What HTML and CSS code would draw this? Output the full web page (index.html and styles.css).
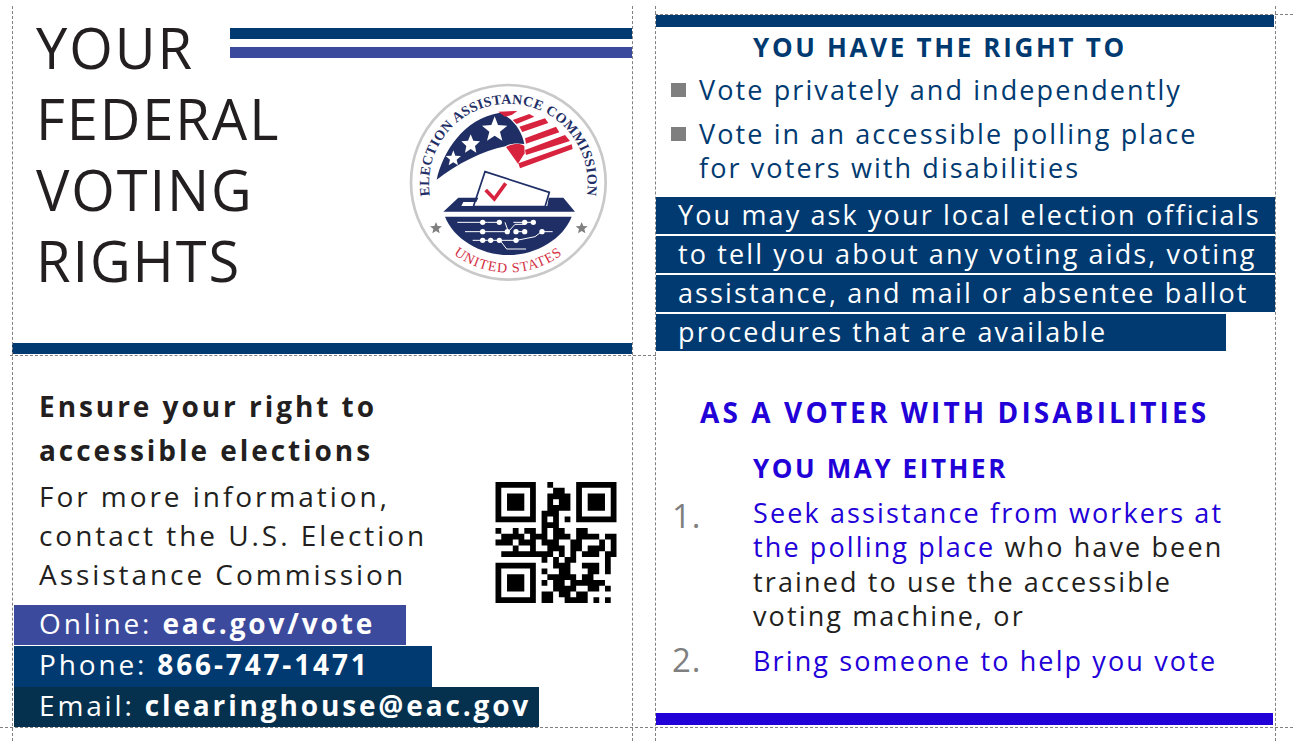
FILE: index.html
```html
<!DOCTYPE html>
<html lang="en">
<head>
<meta charset="utf-8">
<title>Your Federal Voting Rights</title>
<link rel="stylesheet" href="styles.css">
</head>
<body>
<main class="sheet">
  <section class="panel cover">
    <h1 class="title">YOUR<br>FEDERAL<br>VOTING<br>RIGHTS</h1>
    <div class="cover-side">
      <div class="rule rule-navy"></div>
      <div class="rule rule-indigo"></div>
      <svg class="seal" viewBox="0 0 660 645" role="img" aria-label="Election Assistance Commission seal">
        <defs>
          <path id="arcTop" d="M100 402A238 238 0 1 1 550 402"/>
          <path id="arcBottom" d="M71 414A270 270 0 0 0 579 414"/>
        </defs>
        <circle class="seal-ring" cx="325" cy="322" r="292"/>
        <text class="seal-top"><textPath href="#arcTop" startOffset="50%" text-anchor="middle">ELECTION ASSISTANCE COMMISSION</textPath></text>
        <text class="seal-bottom"><textPath href="#arcBottom" startOffset="50%" text-anchor="middle">UNITED STATES</textPath></text>
        <path class="navy" d="M110 314C128 232 190 130 300 113C340 130 366 170 373 207C345 203 325 207 316 214C250 226 170 268 110 314Z"/>
        <path class="red" d="M295 110L352 108L335 120L315 125ZM338 135L388 117L403 125L350 147ZM358 155L435 130L445 144L367 171ZM375 190L468 155L478 172L378 206ZM375 225L495 180L510 198L378 240ZM355 265L515 208L518 222L360 280Z"/>
        <path class="red" d="M318 216C340 205 362 205 373 213L374 235L354 266Z"/>
        <path class="white" d="M160 226l6 16 17 1-13 11 4 17-14-9-14 9 4-17-13-11 17-1ZM212 178l8 19 20 2-15 14 4 20-17-11-17 11 4-20-15-14 20-2ZM284 124l10 26 28 2-22 18 7 27-23-15-23 15 7-27-22-18 28-2Z"/>
        <path class="ballot" d="M255 290L448 352L435 395L220 395Z"/>
        <path class="check" d="M257 345L283 372L317 325"/>
        <path class="navy" d="M130 410L175 368H235L229 381H190L184 393H442L446 368H490L525 410Z"/>
        <path class="navy" d="M135 425H515C490 490 410 540 325 540C240 540 160 490 135 425Z"/>
        <path class="circuit" d="M172 442H250L262 442H300M340 442H400M315 442L325 470L345 448H372M195 470H322M345 470H375M405 485L425 470H458M218 496H262L300 496L320 522H378M305 496H350L405 485"/>
        <g class="dots">
          <circle cx="248" cy="442" r="8"/><circle cx="298" cy="442" r="8"/><circle cx="374" cy="442" r="8"/><circle cx="400" cy="442" r="8"/>
          <circle cx="248" cy="470" r="8"/><circle cx="322" cy="470" r="8"/><circle cx="348" cy="470" r="8"/><circle cx="374" cy="470" r="8"/><circle cx="426" cy="470" r="8"/>
          <circle cx="248" cy="496" r="8"/><circle cx="272" cy="496" r="8"/><circle cx="298" cy="496" r="8"/><circle cx="348" cy="496" r="8"/>
        </g>
        <path class="grey-star" d="M108 441l5 12 13 1-10 8 3 13-11-7-11 7 3-13-10-8 13-1ZM545 441l5 12 13 1-10 8 3 13-11-7-11 7 3-13-10-8 13-1Z"/>
      </svg>
    </div>
  </section>

  <section class="panel rights">
    <div class="bar-navy"></div>
    <h2 class="rights-head">YOU HAVE THE RIGHT TO</h2>
    <ul class="bullets">
      <li>Vote privately and independently</li>
      <li>Vote in an accessible polling place<br>for voters with disabilities</li>
    </ul>
    <div class="bands">
      <p class="band">You may ask your local election officials</p>
      <p class="band">to tell you about any voting aids, voting</p>
      <p class="band">assistance, and mail or absentee ballot</p>
      <p class="band band-short">procedures that are available</p>
    </div>
  </section>

  <section class="panel contact">
    <div class="contact-top">
      <div class="contact-copy">
        <h2 class="ensure">Ensure your right to<br>accessible elections</h2>
        <p class="more">For more information,<br>contact the U.S. Election<br>Assistance Commission</p>
      </div>
      <svg class="qr" viewBox="0 0 21 21" role="img" aria-label="QR code">
        <path d="M0 .5h7M9 .5h1M14 .5h7M0 1.5h1M6 1.5h1M10 1.5h2M14 1.5h1M20 1.5h1M0 2.5h1M2 2.5h3M6 2.5h1M9 2.5h4M14 2.5h1M16 2.5h3M20 2.5h1M0 3.5h1M2 3.5h3M6 3.5h1M9 3.5h1M11 3.5h2M14 3.5h1M16 3.5h3M20 3.5h1M0 4.5h1M2 4.5h3M6 4.5h1M9 4.5h4M14 4.5h1M16 4.5h3M20 4.5h1M0 5.5h1M6 5.5h1M8 5.5h3M14 5.5h1M20 5.5h1M0 6.5h7M8 6.5h1M10 6.5h1M12 6.5h1M14 6.5h7M8 7.5h3M0 8.5h1M3 8.5h1M5 8.5h2M8 8.5h1M10 8.5h2M14 8.5h2M1 9.5h4M6 9.5h3M10 9.5h3M14 9.5h4M19 9.5h2M0 10.5h3M4 10.5h3M8 10.5h3M13 10.5h2M18 10.5h1M20 10.5h1M3 11.5h1M6 11.5h1M9 11.5h3M13 11.5h2M16 11.5h3M20 11.5h1M1 12.5h9M11 12.5h1M13 12.5h1M15 12.5h3M19 12.5h2M8 13.5h1M10 13.5h1M12 13.5h2M19 13.5h1M0 14.5h7M10 14.5h3M15 14.5h3M19 14.5h1M0 15.5h1M6 15.5h1M8 15.5h1M11 15.5h2M16 15.5h2M19 15.5h1M0 16.5h1M2 16.5h3M6 16.5h1M9 16.5h5M15 16.5h2M0 17.5h1M2 17.5h3M6 17.5h1M8 17.5h1M10 17.5h2M13 17.5h6M0 18.5h1M2 18.5h3M6 18.5h1M10 18.5h4M16 18.5h2M19 18.5h1M0 19.5h1M6 19.5h1M8 19.5h2M11 19.5h2M14 19.5h2M0 20.5h7M8 20.5h2M12 20.5h4M17 20.5h1M19 20.5h1"/>
      </svg>
    </div>
    <p class="strip strip-online">Online: <b>eac.gov/vote</b></p>
    <p class="strip strip-phone">Phone: <b>866-747-1471</b></p>
    <p class="strip strip-email">Email: <b>clearinghouse@eac.gov</b></p>
  </section>

  <section class="panel disabilities">
    <h2 class="dis-head">AS A VOTER WITH DISABILITIES</h2>
    <h3 class="dis-sub">YOU MAY EITHER</h3>
    <ol class="steps">
      <li class="step"><span class="num">1.</span><span class="step-text"><span class="blue">Seek assistance from workers at<br>the polling place</span> who have been<br>trained to use the accessible<br>voting machine, or</span></li>
      <li class="step step-2"><span class="num">2.</span><span class="step-text blue">Bring someone to help you vote</span></li>
    </ol>
    <div class="bar-blue"></div>
  </section>

  <div class="mark v v1"></div>
  <div class="mark v v2"></div>
  <div class="mark v v3"></div>
  <div class="mark v v4"></div>
  <div class="mark h h1"></div>
  <div class="mark h h2"></div>
  <div class="mark h h3"></div>
</main>
</body>
</html>
```

FILE: styles.css
```css
* { box-sizing: border-box; }
html, body { margin: 0; padding: 0; background: #fff; }
body { width: 1293px; height: 741px; overflow: hidden; font-family: "Open Sans", "Noto Sans", sans-serif; }
h1, h2, h3, p, ul, ol { margin: 0; padding: 0; font: inherit; }
ul, ol { list-style: none; }

.sheet {
  position: relative;
  width: 1293px;
  height: 741px;
  padding: 15px 0 0 12px;
  display: grid;
  grid-template-columns: 620px 619px;
  grid-template-rows: 340px 372px;
  column-gap: 24px;
}

/* cover */
.cover { display: flex; border-bottom: 11px solid #003a70; height: 339px; }
.title {
  width: 218px;
  padding: 0 0 0 24px;
  font-size: 56px;
  font-weight: 400;
  line-height: 71px;
  letter-spacing: 1.9px;
  color: #231f20;
  white-space: nowrap;
  margin-top: -3px;
}
.cover-side { flex: 1; display: flex; flex-direction: column; padding-top: 13px; }
.rule { height: 11px; }
.rule-navy { background: #003a70; }
.rule-indigo { background: #3c4a9e; margin-top: 8px; }
.seal { width: 220px; height: 215px; margin: 17px 0 0 170px; }
.seal-ring { fill: #fff; stroke: #c9c9c9; stroke-width: 8; }
.seal-top { font: bold 42px "Liberation Serif", serif; letter-spacing: 1.2px; fill: #1f2f66; }
.seal-bottom { font: 42px "Liberation Serif", serif; letter-spacing: 3px; fill: #d32f45; }
.navy { fill: #1f2f66; }
.red { fill: #d8233f; }
.white { fill: #fff; }
.ballot { fill: #fff; stroke: #1f2f66; stroke-width: 5; }
.check { fill: none; stroke: #d8233f; stroke-width: 11; }
.circuit { fill: none; stroke: #fff; stroke-width: 3; }
.dots { fill: #fff; }
.grey-star { fill: #808080; }

/* rights */
.rights { color: #003a70; }
.bar-navy { height: 12px; background: #003a70; margin-right: 1px; }
.rights-head { font-size: 26px; font-weight: 700; line-height: 34px; letter-spacing: 2.67px; padding-left: 97px; margin-top: 3px; }
.bullets { font-size: 27px; line-height: 34px; letter-spacing: 2.1px; margin-top: 9px; white-space: nowrap; }
.bullets li { position: relative; padding-left: 43px; margin-bottom: 10px; }
.bullets li::before { content: ""; position: absolute; left: 15px; top: 10px; width: 15px; height: 14px; background: #7f7f7f; }
.bands { display: flex; flex-direction: column; gap: 2px; margin-top: 12px; }
.band { height: 37px; padding-left: 22px; background: #003a70; color: #fff; font-size: 27px; line-height: 36px; letter-spacing: 2.12px; white-space: nowrap; }
.band-short { width: 570px; }

/* contact */
.contact { display: flex; flex-direction: column; align-items: flex-start; padding-left: 2px; }
.contact-top { display: flex; width: 100%; height: 250px; color: #231f20; }
.contact-copy { width: 481px; padding: 29px 0 0 25px; }
.ensure { font-size: 28px; font-weight: 700; line-height: 44px; letter-spacing: 2.95px; white-space: nowrap; }
.more { font-size: 28px; line-height: 39px; letter-spacing: 2.95px; margin-top: 5px; white-space: nowrap; }
.qr { width: 122px; height: 121px; margin-top: 127px; }
.qr path { fill: none; stroke: #000; stroke-width: 1; }
.strip { height: 40px; padding-left: 25px; color: #fff; font-size: 28px; line-height: 36px; letter-spacing: 2.85px; white-space: nowrap; }
.strip b { letter-spacing: 2.85px; font-weight: 700; }
.strip-online { width: 392px; background: #3c4a9e; margin-bottom: 1px; }
.strip-phone { width: 418px; height: 41px; background: #003a70; }
.strip-email { width: 525px; background: #05314f; }

/* disabilities */
.disabilities { color: #231f20; display: flex; flex-direction: column; padding-top: 39px; height: 370px; }
.blue { color: #2200d8; }
.dis-head { color: #2200d8; font-size: 28px; font-weight: 700; line-height: 37px; letter-spacing: 3.1px; padding-left: 44px; white-space: nowrap; }
.dis-sub { color: #2200d8; font-size: 26px; font-weight: 700; line-height: 34px; letter-spacing: 2.6px; padding-left: 97px; margin-top: 20px; }
.steps { font-size: 27px; line-height: 34.4px; letter-spacing: 2.12px; margin-top: 11px; }
.step { display: flex; white-space: nowrap; }
.step-2 { margin-top: 10px; }
.num { width: 97px; padding-left: 16px; font-size: 33px; color: #7f7f7f; letter-spacing: 1px; line-height: 40px; }
.step-2 .num { line-height: 32px; }
.step-text { display: block; }
.bar-blue { height: 12px; background: #2200d8; margin-top: auto; margin-right: 2px; }

/* crop marks */
.mark { position: absolute; }
.mark.v { top: 6px; bottom: 0; width: 0; border-left: 1px dashed #808080; }
.mark.h { height: 0; border-top: 1px dashed #808080; }
.v1 { left: 12px; }
.v2 { left: 632px; }
.v3 { left: 655px; }
.v4 { left: 1275px; }
.h1 { top: 14px; left: 655px; right: 0; }
.h2 { top: 355px; left: 10px; width: 646px; }
.h3 { top: 727px; left: 0; right: 0; }
```
